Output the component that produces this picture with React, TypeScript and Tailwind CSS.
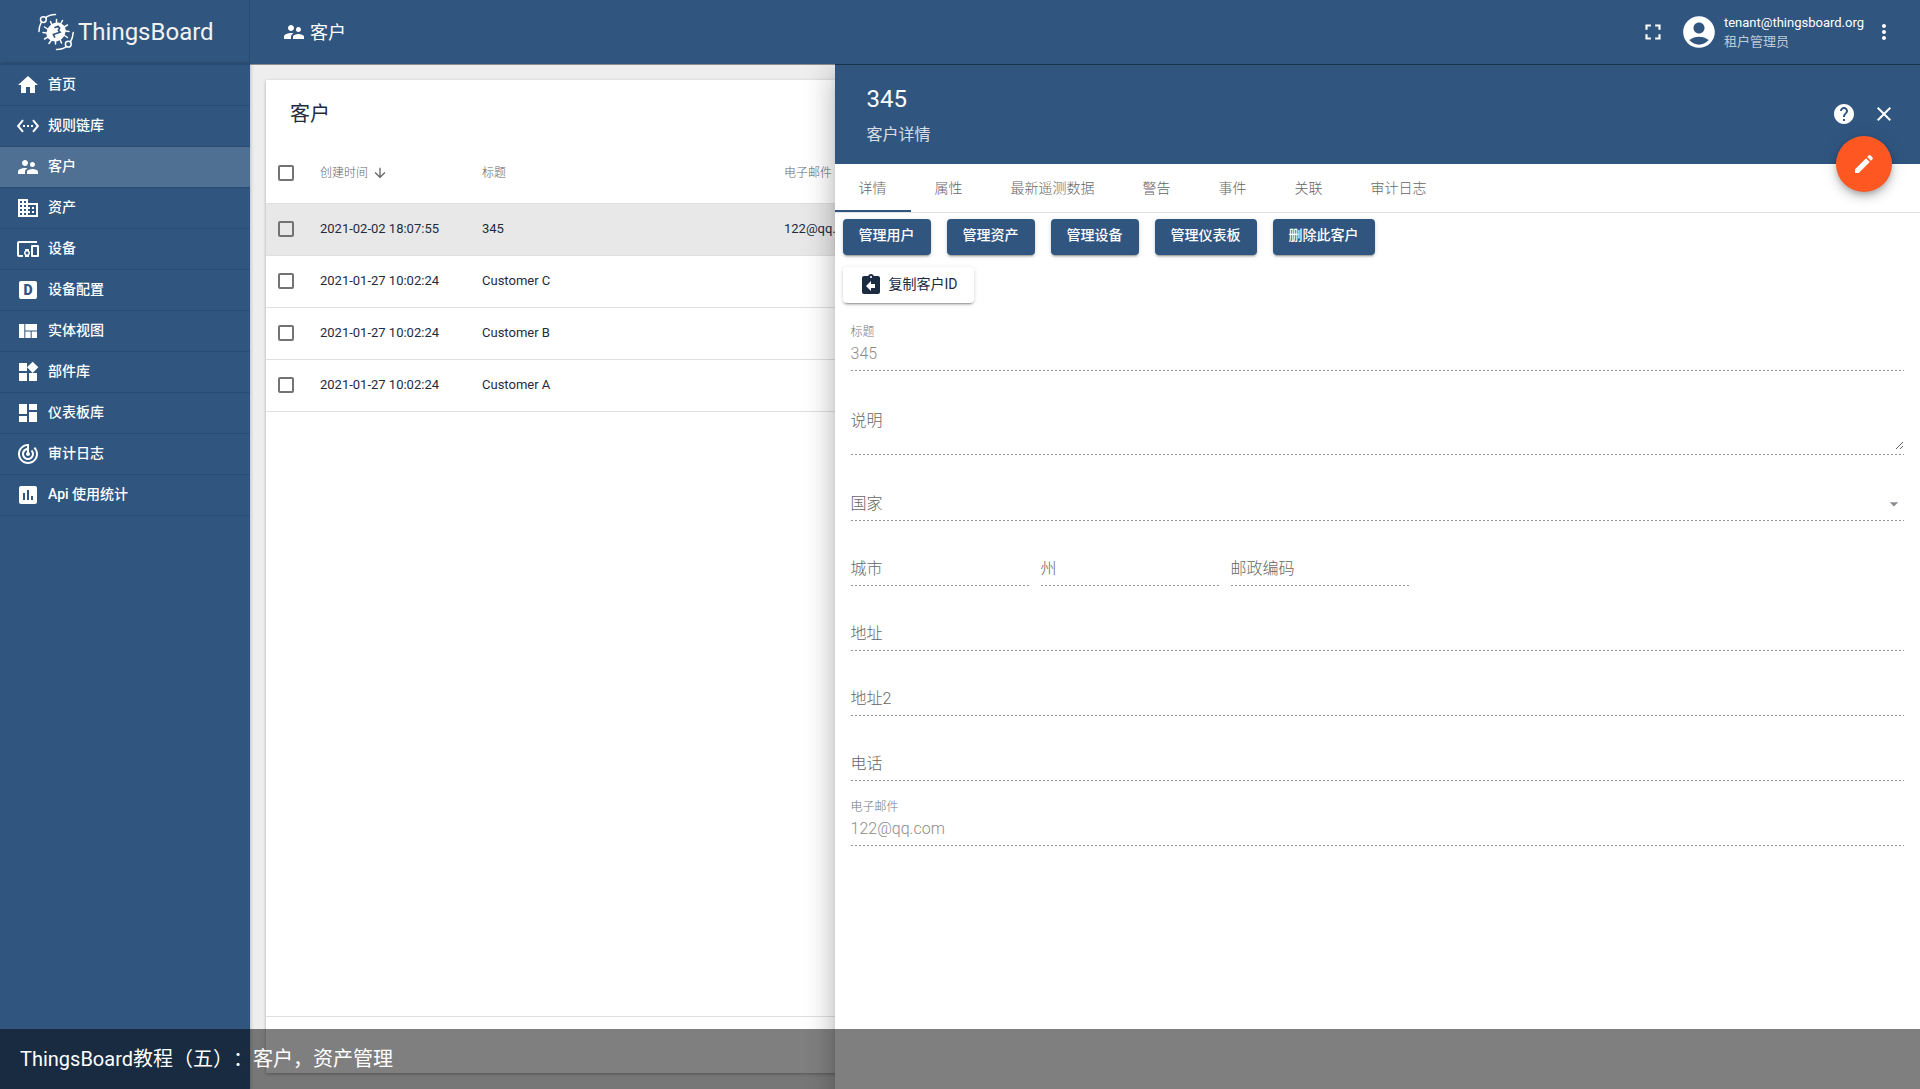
import React, { useState } from 'react';
import {
	MdAccountCircle,
	MdArrowDownward,
	MdArrowDropDown,
	MdAssignmentReturn,
	MdClose,
	MdDashboard,
	MdDevicesOther,
	MdDomain,
	MdEdit,
	MdFullscreen,
	MdHelp,
	MdHome,
	MdInsertChart,
	MdMoreVert,
	MdSettingsEthernet,
	MdSupervisorAccount,
	MdTrackChanges,
	MdViewQuilt,
	MdWidgets,
} from 'react-icons/md';

const ProfileIcon = () => (
	<span className="flex size-6 items-center justify-center">
		<span className="flex size-[18px] items-center justify-center rounded-xs bg-white text-sm font-black text-[#305680]">D</span>
	</span>
);

const menu = [
	{ name: '首页', icon: <MdHome size={24} /> },
	{ name: '规则链库', icon: <MdSettingsEthernet size={24} /> },
	{ name: '客户', icon: <MdSupervisorAccount size={24} /> },
	{ name: '资产', icon: <MdDomain size={24} /> },
	{ name: '设备', icon: <MdDevicesOther size={24} /> },
	{ name: '设备配置', icon: <ProfileIcon /> },
	{ name: '实体视图', icon: <MdViewQuilt size={24} /> },
	{ name: '部件库', icon: <MdWidgets size={24} /> },
	{ name: '仪表板库', icon: <MdDashboard size={24} /> },
	{ name: '审计日志', icon: <MdTrackChanges size={24} /> },
	{ name: 'Api 使用统计', icon: <MdInsertChart size={24} /> },
];

const customers = [
	{ time: '2021-02-02 18:07:55', title: '345', email: '122@qq.com' },
	{ time: '2021-01-27 10:02:24', title: 'Customer C', email: '' },
	{ time: '2021-01-27 10:02:24', title: 'Customer B', email: '' },
	{ time: '2021-01-27 10:02:24', title: 'Customer A', email: '' },
];

const tabs = ['详情', '属性', '最新遥测数据', '警告', '事件', '关联', '审计日志'];
const actions = ['管理用户', '管理资产', '管理设备', '管理仪表板', '删除此客户'];

const Logo = () => (
	<svg width="36" height="38" viewBox="0 0 36 38" fill="none" stroke="#fff" strokeWidth="1.5" strokeLinecap="round">
		{/* orbits */}
		<path d="M17.5 1.5C13 1.6 10 2.6 7.6 4.6M3.4 9C1.8 12 1 15 1 18.5" />
		<circle cx="5.4" cy="6.6" r="2.9" />
		<path d="M18.5 36.5C23 36.4 26 35.4 28.2 33.6M32.4 29C34.2 26 35 23 35.2 19.5" />
		<circle cx="30.3" cy="31.2" r="2.9" />
		{/* pins */}
		<path d="M14 12L12.5 8.5M18.5 10.5V6.5M22.5 11L24.5 7.5M26 14L29.5 12M27.5 18L31 18.5M26.5 22.5L29.5 24.5M22 26.5L23.5 30M17.5 27.5V31M13.5 27L11 30.5M10 24L6.5 26M8.5 20L5 19.5M9.5 16L6.5 14" />
		<path
			d="M18.5 9.5C22 9.3 25.5 11.5 27 14C28.2 16.5 27.8 21 25.5 24C23.2 27 20 28.6 17 28.5C13.5 28.4 10.2 26.4 9 23.5C7.8 20.5 9 16.4 11 13.8C13 11.2 15.8 9.7 18.5 9.5Z"
			fill="#fff"
			stroke="none"
		/>
		<path d="M17 14.5L20 13.2L21.6 15.2L20.4 17.4L22 19.2L15.4 21.4L16.6 24" stroke="#305680" strokeWidth="1.7" />
	</svg>
);

const Checkbox = ({ label }: { label: string }) => (
	<input
		type="checkbox"
		aria-label={label}
		className="ml-3 block size-4 appearance-none rounded-xs border-2 border-[#737373] checked:bg-[#305680]"
	/>
);

// dotted underline of a disabled field
const Underline = () => (
	<div className="h-px bg-[linear-gradient(to_right,#949494_50%,transparent_50%)] bg-[size:4px_1px] bg-repeat-x" />
);

type FieldProps = { id: string; label: string; value?: string; className?: string };

const Field = ({ id, label, value, className = '' }: FieldProps) => (
	<div className={`flex h-[65px] flex-col justify-end ${className}`}>
		{value ? (
			<>
				<label htmlFor={id} className="text-xs leading-5 text-[#75797e]">
					{label}
				</label>
				<input id={id} defaultValue={value} disabled className="mb-1 h-6 w-full text-base text-[#8c8c8c]" />
			</>
		) : (
			<div className="mb-1 grid h-6">
				<label htmlFor={id} className="[grid-area:1/1] text-base text-[#666]">
					{label}
				</label>
				<input id={id} disabled className="[grid-area:1/1] w-full" />
			</div>
		)}
		<Underline />
	</div>
);

const DetailsForm = () => (
	<form className="flex flex-col px-4 pt-[3px] font-light">
		<Field id="title" label="标题" value="345" />
		<div className="flex h-[84px] flex-col justify-end">
			<div className="mb-1 grid h-[41px]">
				<label htmlFor="description" className="[grid-area:1/1] text-base text-[#666]">
					说明
				</label>
				<textarea id="description" disabled className="[grid-area:1/1] h-full w-full resize-y" />
			</div>
			<Underline />
		</div>
		<div className="flex h-[66px] flex-col justify-end">
			<div className="mb-1 grid h-6">
				<label htmlFor="country" className="[grid-area:1/1] text-base text-[#666]">
					国家
				</label>
				<select id="country" disabled className="[grid-area:1/1] w-full appearance-none" />
				<MdArrowDropDown size={20} className="[grid-area:1/1] self-center justify-self-end text-[#8a8a94]" />
			</div>
			<Underline />
		</div>
		<div className="flex gap-3">
			<Field id="city" label="城市" className="w-[178px]" />
			<Field id="state" label="州" className="w-[178px]" />
			<Field id="zip" label="邮政编码" className="w-[178px]" />
		</div>
		<Field id="address" label="地址" />
		<Field id="address2" label="地址2" />
		<Field id="phone" label="电话" />
		<Field id="email" label="电子邮件" value="122@qq.com" />
	</form>
);

const DetailsPanel = () => {
	const [active, setActive] = useState(0);

	return (
		<aside className="absolute inset-y-0 right-0 w-[65%] bg-white shadow-[0_8px_10px_-5px_rgba(0,0,0,0.2),0_16px_24px_2px_rgba(0,0,0,0.14),0_6px_30px_5px_rgba(0,0,0,0.12)]">
			<header className="relative flex h-[100px] items-center bg-[#305680] pr-6 pl-8 text-white">
				<div className="flex-1 pt-1.5">
					<h2 className="text-2xl leading-9">345</h2>
					<p className="text-base leading-9 text-white/80">客户详情</p>
				</div>
				<div className="flex gap-4">
					<button aria-label="帮助">
						<MdHelp size={24} />
					</button>
					<button aria-label="关闭">
						<MdClose size={24} />
					</button>
				</div>
				<button
					aria-label="编辑"
					className="absolute right-7 -bottom-7 z-10 flex size-14 items-center justify-center rounded-full bg-[#ff5722] shadow-[0_3px_5px_-1px_rgba(0,0,0,0.2),0_6px_10px_0_rgba(0,0,0,0.14),0_1px_18px_0_rgba(0,0,0,0.12)]"
				>
					<MdEdit size={24} />
				</button>
			</header>
			<nav className="flex h-[49px] border-b border-[#e0e0e0]">
				{tabs.map((tab, i) => (
					<button
						key={tab}
						onClick={() => setActive(i)}
						className={`border-b-2 px-6 pt-0.5 text-sm font-light text-[#666] ${i === active ? 'border-[#305680]' : 'border-transparent'}`}
					>
						{tab}
					</button>
				))}
			</nav>
			<div className="flex flex-wrap gap-x-4 gap-y-3 px-2 pt-1.5">
				{actions.map((action) => (
					<button
						key={action}
						className="h-9 rounded bg-[#305680] px-4 pb-1 text-sm font-medium text-white shadow-[0_3px_1px_-2px_rgba(0,0,0,0.2),0_2px_2px_0_rgba(0,0,0,0.14),0_1px_5px_0_rgba(0,0,0,0.12)]"
					>
						{action}
					</button>
				))}
				<div className="w-full">
					<button className="flex h-9 items-center gap-1.5 rounded bg-white px-4 text-sm text-[#1a2b42] shadow-[0_3px_1px_-2px_rgba(0,0,0,0.2),0_2px_2px_0_rgba(0,0,0,0.14),0_1px_5px_0_rgba(0,0,0,0.12)]">
						<MdAssignmentReturn size={24} />
						<span className="pb-0.5">复制客户ID</span>
					</button>
				</div>
			</div>
			<DetailsForm />
		</aside>
	);
};

const CustomerTable = () => (
	<section className="flex h-full flex-col bg-white text-[#1f2b40] shadow-[0_1px_3px_rgba(0,0,0,0.3)]">
		<h2 className="h-16 px-6 pt-0.5 text-xl leading-16">客户</h2>
		<table className="w-full table-fixed text-left">
			<thead className="text-xs text-[#666]">
				<tr className="h-[59px] border-b border-[#e0e0e0]">
					<th className="w-[54px]">
						<Checkbox label="全选" />
					</th>
					<th className="w-[162px] font-light">
						<span className="flex items-center gap-1">
							创建时间
							<MdArrowDownward size={16} />
						</span>
					</th>
					<th className="w-[302px] font-light">标题</th>
					<th className="font-light">电子邮件</th>
				</tr>
			</thead>
			<tbody className="text-[13px]">
				{customers.map((customer, i) => (
					<tr key={customer.title} className={`h-[52px] border-b border-[#e0e0e0] ${i === 0 ? 'bg-[#e8e8e8]' : ''}`}>
						<td>
							<Checkbox label={customer.title} />
						</td>
						<td>{customer.time}</td>
						<td>{customer.title}</td>
						<td>{customer.email}</td>
					</tr>
				))}
			</tbody>
		</table>
		<footer className="mt-auto h-[57px] border-t border-[#e0e0e0]" />
	</section>
);

const App = () => {
	return (
		<div className="relative flex h-screen flex-col overflow-hidden bg-[#eee] font-[Roboto,'Noto_Sans_CJK_SC',sans-serif]">
			<header className="flex h-16 shrink-0 items-center bg-[#305680] text-white">
				<a href="#" className="flex h-full w-[250px] items-center border-r border-[#2a4c72] pl-[38px]">
					<Logo />
					<span className="pl-1 text-2xl text-[#f2f2f2]">ThingsBoard</span>
				</a>
				<h1 className="flex flex-1 items-center gap-1 pl-8 text-lg">
					<MdSupervisorAccount size={24} />
					<span className="pt-0.5">客户</span>
				</h1>
				<button aria-label="全屏" className="mr-3.5">
					<MdFullscreen size={26} />
				</button>
				<MdAccountCircle size={38} />
				<div className="pr-2 pl-1.5 text-[13px] leading-[19px]">
					<div>tenant@thingsboard.org</div>
					<div className="text-white/70">租户管理员</div>
				</div>
				<button aria-label="更多" className="mr-6">
					<MdMoreVert size={24} />
				</button>
			</header>
			<div className="flex min-h-0 flex-1">
				<nav className="z-10 w-[250px] border-t border-[#2a4c72] bg-[#305680] text-sm font-medium text-white shadow-[0_0_4px_rgba(0,0,0,0.3)]">
					{menu.map((item) => (
						<a
							key={item.name}
							href="#"
							className={`flex h-[41px] items-center gap-2 border-b border-[#2a4c72] px-4 ${item.name === '客户' ? 'bg-[#4f7093]' : ''}`}
						>
							{item.icon}
							<span className="pb-0.5">{item.name}</span>
						</a>
					))}
				</nav>
				<main className="relative min-w-0 flex-1 overflow-hidden p-4">
					<CustomerTable />
					<DetailsPanel />
					<div className="absolute inset-x-0 top-0 h-px bg-black/40" />
				</main>
			</div>
			<div className="absolute inset-x-0 bottom-0 z-20 flex h-15 items-center bg-black/50 px-5 text-xl text-white [text-spacing-trim:space-all]">
				ThingsBoard教程（五）：客户，资产管理
			</div>
		</div>
	);
};

export default App;
